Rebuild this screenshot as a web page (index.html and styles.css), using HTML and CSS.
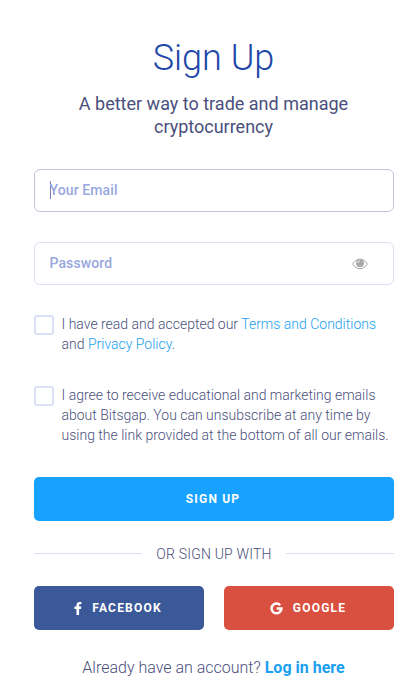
FILE: index.html
```html
<!DOCTYPE html>
<html lang="en">
  <head>
    <meta charset="UTF-8" />
    <meta name="viewport" content="width=device-width, initial-scale=1.0" />
    <title>Sign Up</title>
    <link rel="stylesheet" href="styles.css">
  </head>
  <body>
    <div class="signup">
      <h1 class="title">Sign Up</h1>
      <p class="subtitle">A better way to trade and manage<br>cryptocurrency</p>

      <form class="form">
        <div class="field active">
          <span class="caret"></span>
          <input type="email" class="input" placeholder="Your Email" />
        </div>
        <div class="field">
          <input type="password" class="input" placeholder="Password" />
          <svg class="eye" width="16" height="12" viewBox="0 0 16 12">
            <path fill="none" stroke="#a9a9a9" stroke-width="1" d="M.6 6C2.500 3 5 1.100 8 1.100S13.500 3 15.400 6C13.500 9 11 10.700 8 10.700S2.500 9 .6 6z" />
            <circle cx="8" cy="5.200" r="4" fill="#a9a9a9" />
            <path fill="none" stroke="#fff" stroke-width=".8" d="M5.800 5a2.200 2.200 0 0 1 2.200-2.200" />
          </svg>
        </div>

        <label class="check terms">
          <input type="checkbox" class="box" />
          <span>I have read and accepted our <a href="#">Terms and Conditions</a><br>and <a href="#">Privacy Policy</a>.</span>
        </label>
        <label class="check">
          <input type="checkbox" class="box" />
          <span>I agree to receive educational and marketing emails<br>about Bitsgap. You can unsubscribe at any time by<br>using the link provided at the bottom of all our emails.</span>
        </label>

        <button type="button" class="btn submit">SIGN UP</button>
      </form>

      <div class="divider"><span>OR SIGN UP WITH</span></div>

      <div class="socials">
        <button type="button" class="btn facebook">
          <svg width="8" height="13" viewBox="0 0 8 13">
            <path fill="#fff" d="M7.400.1v2.200H6.200c-.9 0-1.100.4-1.100 1v1.300h2.200L7 6.900H5.100V13H2.500V6.900H.4V4.600h2.100V2.900C2.500 1 3.700 0 5.600 0c.8 0 1.500.1 1.800.1z" />
          </svg>
          <span>FACEBOOK</span>
        </button>
        <button type="button" class="btn google">
          <svg width="13" height="13" viewBox="0 0 13 13">
            <path fill="none" stroke="#fff" stroke-width="2.500" d="M10.200 3.200A4.900 4.900 0 1 0 11.400 6.600H6.700" />
          </svg>
          <span>GOOGLE</span>
        </button>
      </div>

      <p class="login">Already have an account? <a href="#">Log in here</a></p>
    </div>
  </body>
</html>
```
FILE: styles.css
```css
* {
  margin: 0;
  padding: 0;
  box-sizing: border-box;
}
body {
  background-color: #fff;
  font-family: Roboto, "Liberation Sans", sans-serif;
  color: #4a4f7c;
  overflow: hidden;
}
a {
  color: #1b9ff0;
  text-decoration: none;
}

.signup {
  width: 360px;
  margin-left: 34px;
  padding-top: 36px;
}
.title {
  padding-right: 1px;
  font-size: 36px;
  font-weight: 300;
  line-height: 44px;
  text-align: center;
  color: #2148a8;
}
.subtitle {
  margin-top: 12px;
  padding-right: 1px;
  font-size: 18px;
  line-height: 23px;
  text-align: center;
}

.form {
  margin-top: 31px;
}
.field {
  display: flex;
  align-items: center;
  height: 43px;
  margin-bottom: 30px;
  padding: 0 25px 0 14.500px;
  border: 1px solid #dbe0f2;
  border-radius: 6px;
}
.field.active {
  border-color: #c3c3dc;
}
.caret {
  width: 1px;
  height: 18px;
  margin-right: -1px;
  margin-bottom: 2px;
  background-color: #7784b8;
}
.input {
  flex: 1;
  min-width: 0;
  padding-bottom: 2px;
  border: 0;
  outline: 0;
  background: transparent;
  font: 500 14px Roboto, sans-serif;
  letter-spacing: 0.1px;
}
.input::placeholder {
  color: #98a7e0;
}

.check {
  display: flex;
  gap: 7.500px;
  font-size: 14px;
  font-weight: 300;
  line-height: 20px;
  white-space: nowrap;
}
.terms {
  margin-top: -1px;
  margin-bottom: 31px;
}
.box {
  appearance: none;
  flex: none;
  width: 20px;
  height: 20px;
  margin-top: 1px;
  border: 2px solid #dbe0f6;
  border-radius: 3px;
}

.btn {
  display: flex;
  align-items: center;
  justify-content: center;
  gap: 10px;
  width: 100%;
  height: 44px;
  padding-right: 2px;
  border: 0;
  border-radius: 5px;
  color: #fff;
  font: 700 12px Roboto, sans-serif;
  letter-spacing: 1.200px;
}
.submit {
  margin-top: 32px;
  background-color: #17a2ff;
}
.divider {
  display: flex;
  align-items: center;
  gap: 14px;
  margin: 23px 0 22px;
  font-size: 14px;
  font-weight: 300;
  line-height: 20px;
  letter-spacing: 0.2px;
}
.divider::before,
.divider::after {
  content: "";
  flex: 1;
  height: 1px;
  margin-bottom: 1px;
  background-color: #dbdff0;
}
.socials {
  display: flex;
  gap: 20px;
}
.facebook {
  background-color: #3b5998;
}
.google {
  background-color: #d95040;
}
.login {
  margin-top: 28px;
  padding-right: 1px;
  font-size: 16px;
  font-weight: 300;
  line-height: 20px;
  text-align: center;
}
.login a {
  font-weight: 700;
}
```
